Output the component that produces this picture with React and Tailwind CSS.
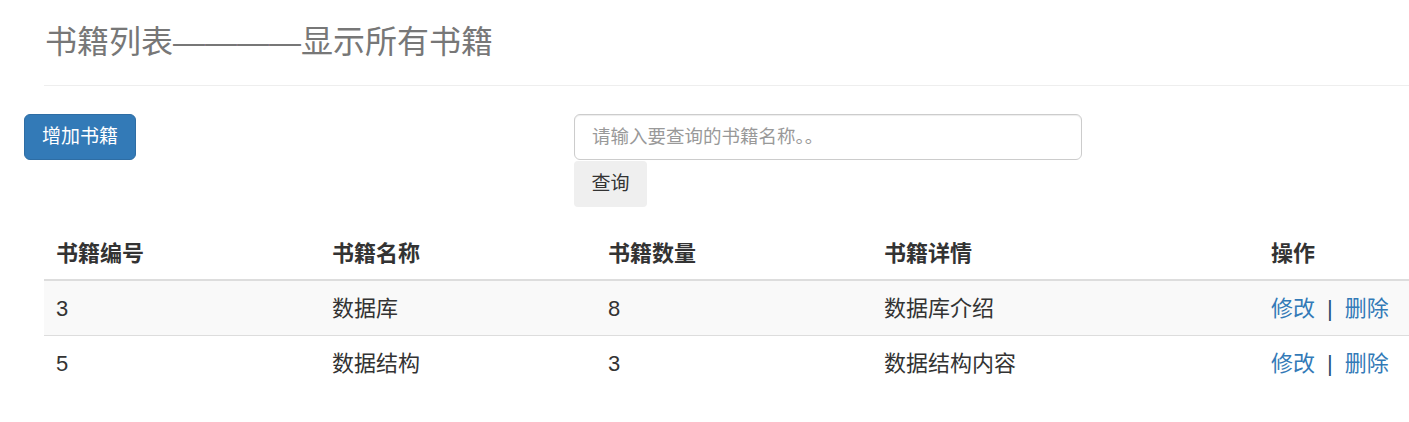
export default function App() {
  const books = [
    { id: 3, name: '数据库', count: 8, detail: '数据库介绍' },
    { id: 5, name: '数据结构', count: 3, detail: '数据结构内容' },
  ];

  const font = { fontFamily: '"Liberation Sans", "Noto Sans CJK SC", sans-serif' };

  return (
    <div className="w-[1409px] bg-white text-[#333]" style={font}>
      {/* page header */}
      <div className="ml-[44px] border-b border-[#eee] pt-[25px] pb-[25px]">
        <h1 className="pl-[1px] text-[32px] leading-[35px] font-normal text-[#777]">
          书籍列表————显示所有书籍
        </h1>
      </div>

      {/* toolbar */}
      <div className="mt-[28px] flex items-start">
        <button className="ml-[24px] h-[46px] w-[112px] rounded-[6px] border border-[#2e6da4] bg-[#337ab7] text-[19px] text-white">
          增加书籍
        </button>
        <div className="ml-[438px] flex flex-col items-start">
          <input
            type="text"
            placeholder="请输入要查询的书籍名称。。"
            className="h-[46px] w-[508px] rounded-[6px] border border-[#ccc] px-[17px] text-[18.5px] text-[#555] outline-none placeholder:text-[#999] shadow-[inset_0_1px_1px_rgba(0,0,0,0.075)]"
          />
          <button className="mt-px h-[46px] w-[73px] rounded-[4px] bg-[#efefef] text-[19px] text-[#333]">
            查询
          </button>
        </div>
      </div>

      {/* table */}
      <div className="ml-[44px] mt-[21px] text-[22px]">
        <div className="grid h-[53px] grid-cols-[276px_276px_276px_387px_1fr] items-center border-b-2 border-[#ddd] font-bold">
          <div className="pl-[12px]">书籍编号</div>
          <div className="pl-[12px]">书籍名称</div>
          <div className="pl-[12px]">书籍数量</div>
          <div className="pl-[12px]">书籍详情</div>
          <div className="pl-[12px]">操作</div>
        </div>
        {books.map((b, i) => (
          <div
            key={b.id}
            className={`grid h-[55px] grid-cols-[276px_276px_276px_387px_1fr] items-center ${
              i === 0 ? 'bg-[#f9f9f9] border-b border-[#ddd]' : ''
            }`}
          >
            <div className="pl-[12px]">{b.id}</div>
            <div className="pl-[12px]">{b.name}</div>
            <div className="pl-[12px]">{b.count}</div>
            <div className="pl-[12px]">{b.detail}</div>
            <div className="flex items-center pl-[12px]">
              <a className="text-[#337ab7]">修改</a>
              <span className="mx-[12px] text-[#2b4f73]">|</span>
              <a className="text-[#337ab7]">删除</a>
            </div>
          </div>
        ))}
      </div>
    </div>
  );
}
